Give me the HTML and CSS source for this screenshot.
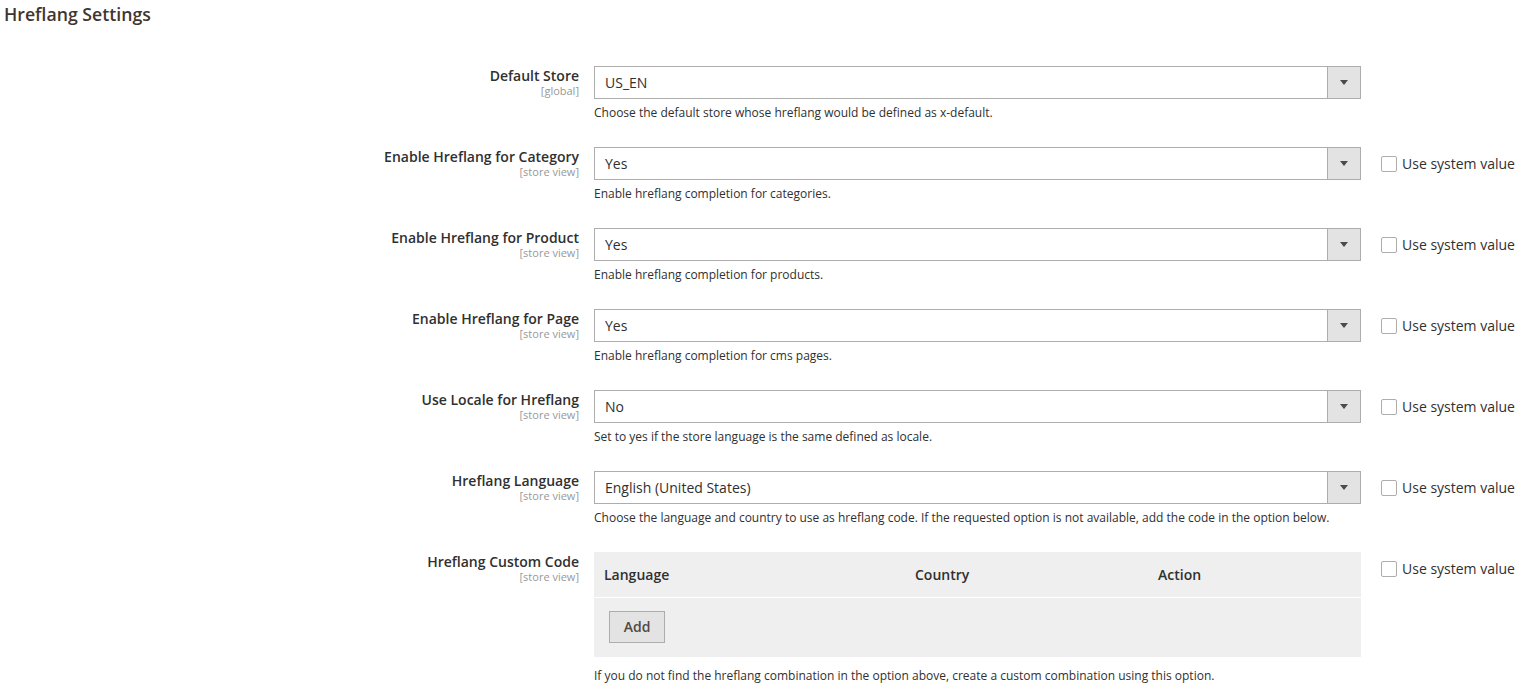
FILE: index.html
```html
<!DOCTYPE html>
<html>
<head>
<meta charset="utf-8">
<link rel="stylesheet" href="styles.css">
</head>
<body>
<h1 class="title">Hreflang Settings</h1>
<div class="form">
  <div class="row">
    <div class="label"><span class="name">Default Store</span><span class="scope">[global]</span></div>
    <div class="control">
      <div class="select"><span class="value">US_EN</span><span class="arrow"></span></div>
      <p class="note">Choose the default store whose hreflang would be defined as x-default.</p>
    </div>
    <div class="use-default"></div>
  </div>
  <div class="row">
    <div class="label"><span class="name">Enable Hreflang for Category</span><span class="scope">[store view]</span></div>
    <div class="control">
      <div class="select"><span class="value">Yes</span><span class="arrow"></span></div>
      <p class="note">Enable hreflang completion for categories.</p>
    </div>
    <div class="use-default"><label class="check"><span class="box"></span>Use system value</label></div>
  </div>
  <div class="row">
    <div class="label"><span class="name">Enable Hreflang for Product</span><span class="scope">[store view]</span></div>
    <div class="control">
      <div class="select"><span class="value">Yes</span><span class="arrow"></span></div>
      <p class="note">Enable hreflang completion for products.</p>
    </div>
    <div class="use-default"><label class="check"><span class="box"></span>Use system value</label></div>
  </div>
  <div class="row">
    <div class="label"><span class="name">Enable Hreflang for Page</span><span class="scope">[store view]</span></div>
    <div class="control">
      <div class="select"><span class="value">Yes</span><span class="arrow"></span></div>
      <p class="note">Enable hreflang completion for cms pages.</p>
    </div>
    <div class="use-default"><label class="check"><span class="box"></span>Use system value</label></div>
  </div>
  <div class="row">
    <div class="label"><span class="name">Use Locale for Hreflang</span><span class="scope">[store view]</span></div>
    <div class="control">
      <div class="select"><span class="value">No</span><span class="arrow"></span></div>
      <p class="note">Set to yes if the store language is the same defined as locale.</p>
    </div>
    <div class="use-default"><label class="check"><span class="box"></span>Use system value</label></div>
  </div>
  <div class="row">
    <div class="label"><span class="name">Hreflang Language</span><span class="scope">[store view]</span></div>
    <div class="control">
      <div class="select"><span class="value">English (United States)</span><span class="arrow"></span></div>
      <p class="note">Choose the language and country to use as hreflang code. If the requested option is not available, add the code in the option below.</p>
    </div>
    <div class="use-default"><label class="check"><span class="box"></span>Use system value</label></div>
  </div>
  <div class="row">
    <div class="label"><span class="name">Hreflang Custom Code</span><span class="scope">[store view]</span></div>
    <div class="control">
      <table class="grid">
        <thead>
          <tr><th class="c1">Language</th><th class="c2">Country</th><th class="c3">Action</th></tr>
        </thead>
        <tbody>
          <tr><td colspan="3" class="actions"><button class="btn">Add</button></td></tr>
        </tbody>
      </table>
      <p class="note note-table">If you do not find the hreflang combination in the option above, create a custom combination using this option.</p>
    </div>
    <div class="use-default use-table"><label class="check"><span class="box"></span>Use system value</label></div>
  </div>
</div>
</body>
</html>
```
FILE: styles.css
```css
* { box-sizing: border-box; }
body {
  margin: 0;
  font-family: "Open Sans", "Liberation Sans", sans-serif;
  color: #303030;
  background: #fff;
}
.title {
  margin: 4px 0 0 4px;
  font-size: 17.7px;
  line-height: 20px;
  font-weight: 600;
  color: #41362f;
}
.form {
  margin-top: 42px;
}
.row {
  display: grid;
  grid-template-columns: 579px 767px 1fr;
  column-gap: 15px;
  margin-bottom: 26px;
}
.label {
  display: flex;
  flex-direction: column;
  align-items: flex-end;
  text-align: right;
  padding-top: 2px;
}
.name {
  font-size: 14px;
  line-height: 16px;
  font-weight: 600;
  color: #303030;
}
.scope {
  margin-top: 1px;
  font-size: 11px;
  line-height: 12px;
  color: #999;
}
.select {
  display: flex;
  height: 33px;
  border: 1px solid #adadad;
  background: #fff;
}
.value {
  flex: 1;
  padding-left: 10px;
  font-size: 14px;
  line-height: 31px;
  color: #303030;
}
.arrow {
  width: 33px;
  border-left: 1px solid #adadad;
  background: #e3e3e3;
  display: flex;
  align-items: center;
  justify-content: center;
}
.arrow::after {
  content: "";
  width: 0;
  height: 0;
  border-left: 4px solid transparent;
  border-right: 4px solid transparent;
  border-top: 5px solid #514943;
}
.note {
  margin: 6px 0 0;
  font-size: 12px;
  line-height: 16px;
  color: #303030;
}
.note-table {
  margin-top: 11px;
}
.use-default {
  padding: 9px 0 0 5px;
}
.check {
  display: flex;
  align-items: center;
  gap: 5px;
  font-size: 14px;
  line-height: 16px;
  color: #303030;
  white-space: nowrap;
}
.box {
  width: 16px;
  height: 16px;
  border: 1px solid #adadad;
  border-radius: 2px;
  background: #fff;
}
.grid {
  width: 767px;
  border-collapse: collapse;
  background: #efefef;
  table-layout: fixed;
}
.grid th {
  height: 45px;
  padding: 0 10px;
  text-align: left;
  font-size: 14px;
  font-weight: 600;
  color: #303030;
  border-bottom: 1px solid #fff;
}
.c1 { width: 311px; }
.c2 { width: 243px; }
.actions {
  padding: 13px 15px 14px;
}
.btn {
  display: block;
  width: 56px;
  height: 32px;
  padding: 0;
  border: 1px solid #adadad;
  background: #e3e3e3;
  font-family: "Open Sans", "Liberation Sans", sans-serif;
  font-size: 14px;
  font-weight: 600;
  color: #514943;
}
```
